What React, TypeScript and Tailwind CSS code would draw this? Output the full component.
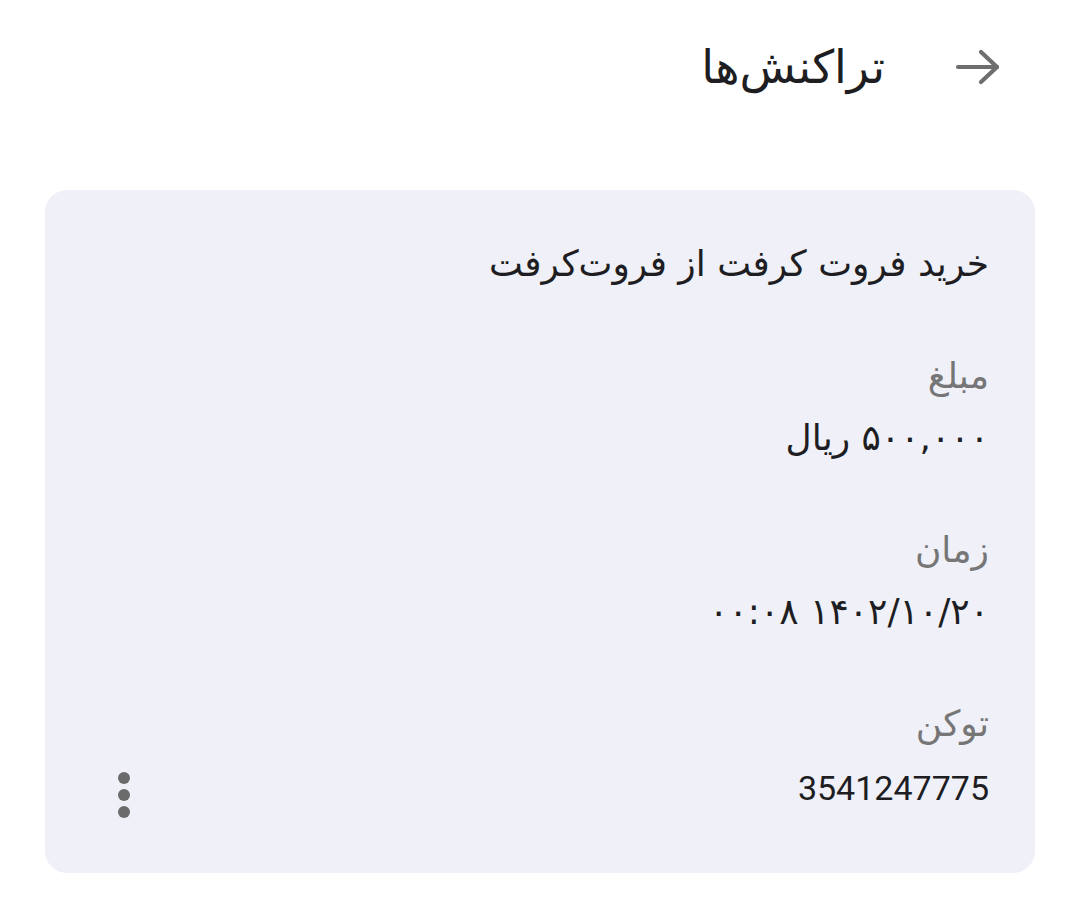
const rows = [
  { label: "مبلغ", value: "۵۰۰,۰۰۰ ریال", latin: false },
  { label: "زمان", value: "۱۴۰۲/۱۰/۲۰ ۰۰:۰۸", latin: false },
  { label: "توکن", value: "3541247775", latin: true },
];

function ArrowForward() {
  return (
    <svg width="46" height="36" viewBox="0 0 46 36" fill="none" stroke="#6e6e6e" strokeWidth="4.2" strokeLinecap="round" strokeLinejoin="round">
      <path d="M3 18h39" />
      <path d="M26 3l16 15-16 15" />
    </svg>
  );
}

export default function App() {
  return (
    <div
      dir="rtl"
      className="flex h-[902px] w-[1080px] flex-col bg-white text-[#1d1d22]"
      style={{ fontFamily: '"DejaVu Sans", sans-serif' }}
    >
      <header className="flex h-[134px] items-center gap-[70px] pr-[79px]">
        <ArrowForward />
        <h1 className="text-[46px] leading-none">تراکنش‌ها</h1>
      </header>

      <div className="mx-[45px] mt-[56px] flex h-[683px] items-end justify-between rounded-[22px] bg-[#eff0f8] pt-[54px] pr-[46px] pb-[55px] pl-[73px]">
        <div className="flex h-full flex-col">
          <p className="text-[36px] leading-[40px]">خرید فروت کرفت از فروت‌کرفت</p>
          {rows.map((r) => (
            <div key={r.label} className="mt-[72px]">
              <p className="text-[36px] leading-[40px] text-[#767676]">{r.label}</p>
              {r.latin ? (
                <p className="mt-[24px] text-[34px] leading-[40px]" style={{ fontFamily: '"Roboto", sans-serif' }}>
                  {r.value}
                </p>
              ) : (
                <p className="mt-[22px] text-[36px] leading-[40px]">{r.value}</p>
              )}
            </div>
          ))}
        </div>
        <button className="flex flex-col items-center gap-[5px]">
          <span className="h-[12px] w-[12px] rounded-full bg-[#6b6b6b]" />
          <span className="h-[12px] w-[12px] rounded-full bg-[#6b6b6b]" />
          <span className="h-[12px] w-[12px] rounded-full bg-[#6b6b6b]" />
        </button>
      </div>
    </div>
  );
}
